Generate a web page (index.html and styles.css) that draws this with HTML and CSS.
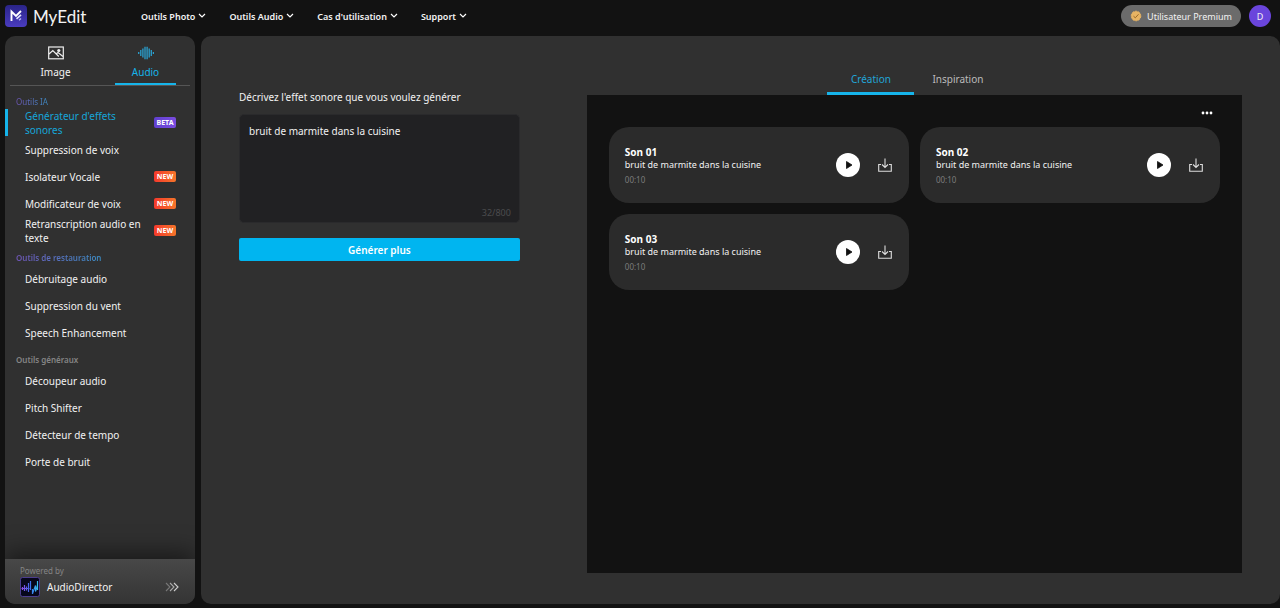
FILE: index.html
```html
<!DOCTYPE html>
<html lang="fr">

<head>
    <meta charset="UTF-8">
    <meta name="viewport" content="width=device-width, initial-scale=1.0">
    <title>MyEdit</title>
    <link rel="stylesheet" href="styles.css">
</head>

<body>

    <!-- shared icons -->
    <svg class="defs" width="0" height="0">
        <symbol id="chevron" viewBox="0 0 8 6">
            <path d="M1 1l3 3 3-3" fill="none" stroke="#fff" stroke-width="1.2" />
        </symbol>
        <symbol id="play" viewBox="0 0 24 24">
            <path d="M10.5 8.5v7l5.500-3.500z" fill="#111" stroke="#111" stroke-width="0.8" stroke-linejoin="round" />
        </symbol>
        <symbol id="download" viewBox="0 0 14 14">
            <path d="M7 0.5v9M4 6.5l3 3 3-3M3 6.5H0.7v6.8h12.6V6.5H11" fill="none" stroke="#ddd" stroke-width="1.1" />
        </symbol>
    </svg>

    <header class="header">
        <a class="logo" href="#">
            <svg width="22" height="22" viewBox="0 0 22 22">
                <defs>
                    <linearGradient id="logoBg" x1="0" y1="0" x2="0" y2="1">
                        <stop offset="0" stop-color="#2a2488" />
                        <stop offset="1" stop-color="#4a3cc0" />
                    </linearGradient>
                </defs>
                <rect width="22" height="22" rx="4" fill="url(#logoBg)" />
                <path d="M6.5 16V6.5l4.500 4.500L16 6" fill="none" stroke="#fff" stroke-width="1.9" />
                <path d="M11.500 13.800l4.500-4" fill="none" stroke="#e4e6ff" stroke-width="1.6" />
                <path d="M14 15.200l2-1.700" fill="none" stroke="#b5b8f5" stroke-width="1.4" />
            </svg>
            <span>MyEdit</span>
        </a>
        <nav class="menu">
            <a href="#">Outils Photo <svg width="8" height="6"><use href="#chevron" /></svg></a>
            <a href="#">Outils Audio <svg width="8" height="6"><use href="#chevron" /></svg></a>
            <a href="#">Cas d'utilisation <svg width="8" height="6"><use href="#chevron" /></svg></a>
            <a href="#">Support <svg width="8" height="6"><use href="#chevron" /></svg></a>
        </nav>
        <button class="premium">
            <svg width="12" height="12" viewBox="0 0 12 12">
                <circle cx="6" cy="6" r="4.8" fill="#e9b463" stroke="#e9b463" stroke-dasharray="2 1" />
                <path d="M3.500 6.200l1.800 1.600 3.200-3.500" fill="none" stroke="#9b6a25" stroke-width="1" />
            </svg>
            Utilisateur Premium
        </button>
        <button class="avatar">D</button>
    </header>

    <div class="page">

        <aside class="sidebar">
            <div class="tabs">
                <button class="tab">
                    <svg width="16" height="14" viewBox="0 0 16 14">
                        <rect x="0.7" y="1" width="14.600" height="11.800" fill="none" stroke="#eee" stroke-width="1.2" />
                        <path d="M1 8l3.800-3.500 6 6M8 8l2-1.500 5 4" fill="none" stroke="#eee" stroke-width="1.2" />
                        <circle cx="10.800" cy="4.500" r="1.6" fill="#eee" />
                    </svg>
                    Image
                </button>
                <button class="tab active">
                    <svg width="16" height="14" viewBox="0 0 16 14">
                        <path d="M0.700 6v2M2.800 4v6M4.900 2.500v9M7 0.800v12.400M9.100 0.800v12.400M11.200 2.500v9M13.300 4v6M15.400 6v2" stroke="#2aa0cf" stroke-width="1.3" />
                    </svg>
                    Audio
                </button>
            </div>

            <nav class="tools">
                <h2 class="purple">Outils IA</h2>
                <a class="tool current" href="#"><span>Générateur d'effets sonores</span><em class="badge beta">BETA</em></a>
                <a class="tool" href="#">Suppression de voix</a>
                <a class="tool" href="#"><span>Isolateur Vocale</span><em class="badge">NEW</em></a>
                <a class="tool" href="#"><span>Modificateur de voix</span><em class="badge">NEW</em></a>
                <a class="tool" href="#"><span>Retranscription audio en texte</span><em class="badge">NEW</em></a>

                <h2 class="purple bold">Outils de restauration</h2>
                <a class="tool" href="#">Débruitage audio</a>
                <a class="tool" href="#">Suppression du vent</a>
                <a class="tool" href="#">Speech Enhancement</a>

                <h2 class="bold">Outils généraux</h2>
                <a class="tool" href="#">Découpeur audio</a>
                <a class="tool" href="#">Pitch Shifter</a>
                <a class="tool" href="#">Détecteur de tempo</a>
                <a class="tool" href="#">Porte de bruit</a>
            </nav>

            <a class="powered" href="#">
                <small>Powered by</small>
                <span class="product">
                    <svg width="20" height="20" viewBox="0 0 20 20">
                        <defs>
                            <linearGradient id="wave" gradientUnits="userSpaceOnUse" x1="1" y1="0" x2="19" y2="0">
                                <stop offset="0" stop-color="#9a45e8" />
                                <stop offset="0.5" stop-color="#3b6cf0" />
                                <stop offset="1" stop-color="#35cdf0" />
                            </linearGradient>
                        </defs>
                        <rect x="0.5" y="0.5" width="19" height="19" rx="2" fill="#07071c" stroke="#4c3d8f" />
                        <path d="M2.500 10v3M4.500 8v6M6.500 9.500v4M8.500 6v9M10.500 4v9M12.500 12v5M17.500 4v9" fill="none" stroke="url(#wave)" stroke-width="1.2" />
                        <path d="M1.500 11.500h8M12.500 16.500l3-8v6l2-6" fill="none" stroke="url(#wave)" stroke-width="1.1" />
                    </svg>
                    AudioDirector
                    <svg class="arrows" width="15" height="10" viewBox="0 0 15 10" fill="none" stroke-width="1.1">
                        <path d="M1 1l4 4-4 4" stroke="#777" />
                        <path d="M5 1l4 4-4 4" stroke="#aaa" />
                        <path d="M9 1l4 4-4 4" stroke="#ccc" />
                    </svg>
                </span>
            </a>
        </aside>

        <main class="main">
            <form class="generator">
                <label for="prompt">Décrivez l'effet sonore que vous voulez générer</label>
                <div class="prompt-box">
                    <textarea id="prompt" name="prompt" maxlength="800">bruit de marmite dans la cuisine</textarea>
                    <span class="counter">32/800</span>
                </div>
                <button type="button" class="generate">Générer plus</button>
            </form>

            <section class="results">
                <div class="result-tabs">
                    <button class="active">Création</button>
                    <button>Inspiration</button>
                </div>
                <div class="panel">
                    <button class="more" aria-label="Plus">
                        <svg width="12" height="4" viewBox="0 0 12 4" fill="#fff">
                            <circle cx="2" cy="2" r="1.4" />
                            <circle cx="6" cy="2" r="1.4" />
                            <circle cx="10" cy="2" r="1.4" />
                        </svg>
                    </button>
                    <div class="sounds">
                        <article class="sound">
                            <div class="info">
                                <h3>Son 01</h3>
                                <p>bruit de marmite dans la cuisine</p>
                                <time>00:10</time>
                            </div>
                            <button class="play" aria-label="Lire"><svg width="24" height="24"><use href="#play" /></svg></button>
                            <button class="download" aria-label="Télécharger"><svg width="14" height="14"><use href="#download" /></svg></button>
                        </article>
                        <article class="sound">
                            <div class="info">
                                <h3>Son 02</h3>
                                <p>bruit de marmite dans la cuisine</p>
                                <time>00:10</time>
                            </div>
                            <button class="play" aria-label="Lire"><svg width="24" height="24"><use href="#play" /></svg></button>
                            <button class="download" aria-label="Télécharger"><svg width="14" height="14"><use href="#download" /></svg></button>
                        </article>
                        <article class="sound">
                            <div class="info">
                                <h3>Son 03</h3>
                                <p>bruit de marmite dans la cuisine</p>
                                <time>00:10</time>
                            </div>
                            <button class="play" aria-label="Lire"><svg width="24" height="24"><use href="#play" /></svg></button>
                            <button class="download" aria-label="Télécharger"><svg width="14" height="14"><use href="#download" /></svg></button>
                        </article>
                    </div>
                </div>
            </section>
        </main>

    </div>

</body>

</html>
```
FILE: styles.css
```css
* {
    box-sizing: border-box;
}

body {
    display: flex;
    flex-direction: column;
    height: 100vh;
    margin: 0;
    background-color: #121212;
    color: #f2f2f2;
    font-family: 'Segoe UI', 'Noto Sans', sans-serif;
    font-size: 10px;
}

a {
    color: inherit;
    text-decoration: none;
}

button {
    padding: 0;
    border: none;
    background: none;
    color: inherit;
    font-family: inherit;
    font-size: inherit;
    cursor: pointer;
}

svg {
    flex-shrink: 0;
}

h2, h3, p {
    margin: 0;
}

.defs {
    position: absolute;
}

/* Header */
.header {
    display: flex;
    align-items: center;
    flex-shrink: 0;
    height: 36px;
    padding: 0 9px 4px 5px;
}

.logo {
    display: flex;
    align-items: center;
    gap: 6px;
    width: 136px;
    font-family: Lato, sans-serif;
    font-size: 17px;
}

.menu {
    display: flex;
    gap: 23px;
    flex: 1;
    font-size: 9px;
    font-weight: 600;
}

.menu a {
    display: flex;
    align-items: center;
    gap: 3px;
}

.premium {
    display: flex;
    align-items: center;
    justify-content: center;
    gap: 5px;
    width: 120px;
    height: 22px;
    border-radius: 11px;
    background-color: #6b6b6b;
    font-size: 9px;
}

.avatar {
    width: 22px;
    height: 22px;
    margin-left: 8px;
    border-radius: 50%;
    background-color: #6a45dc;
    font-size: 9px;
}

.page {
    display: flex;
    flex: 1;
    gap: 6px;
    min-height: 0;
    padding: 0 0 4px 5px;
}

/* Sidebar */
.sidebar {
    display: flex;
    flex-direction: column;
    flex-shrink: 0;
    width: 190px;
    border-radius: 10px;
    background-color: #303030;
    overflow: hidden;
}

.tabs {
    display: flex;
    justify-content: space-between;
    margin: 0 5px;
    padding: 0 14px 0 15px;
    border-bottom: 1px solid #555;
}

.tab {
    display: flex;
    flex-direction: column;
    align-items: center;
    gap: 4px;
    width: 61px;
    height: 49px;
    padding-top: 10px;
    line-height: 16px;
    border-bottom: 2px solid transparent;
}

.tab.active {
    border-color: #16b4ea;
    color: #16b4ea;
}

.tools {
    flex: 1;
    padding-top: 2px;
}

.tools h2 {
    width: fit-content;
    margin: 6px 0 0 11px;
    color: #858585;
    font-size: 8px;
    font-weight: 400;
    line-height: 15px;
}

.tools h2.bold {
    font-weight: 600;
}

.tools .purple {
    background: linear-gradient(90deg, #6f55b5, #3c8cc4);
    -webkit-background-clip: text;
    background-clip: text;
    color: transparent;
}

.tool {
    display: flex;
    align-items: center;
    justify-content: space-between;
    height: 27px;
    padding: 0 19px 0 17px;
    border-left: 3px solid transparent;
    line-height: 14px;
}

.tool span {
    max-width: 120px;
}

.tool.current {
    border-color: #16b4ea;
    color: #16a6d8;
}

.badge {
    width: 22px;
    border-radius: 2px;
    background: linear-gradient(90deg, #f5392c, #f5752a);
    color: #fff;
    font-size: 7px;
    font-style: normal;
    font-weight: 700;
    line-height: 11px;
    text-align: center;
}

.badge.beta {
    background: linear-gradient(90deg, #6040d0, #7a4ce0);
}

.powered {
    display: block;
    height: 45px;
    padding: 6px 15px 0;
    background: linear-gradient(#484848, #343434);
    box-shadow: 0 -6px 24px rgba(0, 0, 0, 0.5);
}

.powered small {
    display: block;
    color: #858585;
    font-size: 8px;
    line-height: 12px;
}

.product {
    display: flex;
    align-items: center;
    gap: 7px;
}

.arrows {
    margin-left: auto;
}

/* Main */
.main {
    display: flex;
    flex: 1;
    gap: 67px;
    padding: 32px 38px 31px;
    border-radius: 10px;
    background-color: #303030;
}

.generator {
    flex: 0 0 28%;
    padding-top: 21px;
}

.generator label {
    display: block;
    margin-bottom: 9px;
    line-height: 16px;
}

.prompt-box {
    position: relative;
    height: 109px;
    margin-bottom: 15px;
}

.prompt-box textarea {
    width: 100%;
    height: 100%;
    padding: 9px;
    border: 1px solid #2a2a2c;
    border-radius: 5px;
    background-color: #212123;
    color: #f2f2f2;
    font-family: inherit;
    font-size: 10px;
    line-height: 14px;
    resize: none;
}

.counter {
    position: absolute;
    right: 9px;
    bottom: 4px;
    color: #4c4c4e;
    font-size: 9px;
}

.generate {
    width: 100%;
    height: 23px;
    border-radius: 2px;
    background-color: #00b5f0;
    color: #fff;
    font-weight: 600;
}

.results {
    display: flex;
    flex-direction: column;
    flex: 1;
}

.result-tabs {
    display: flex;
    justify-content: center;
}

.result-tabs button {
    width: 87px;
    height: 27px;
    padding-bottom: 2px;
    border-bottom: 3px solid transparent;
    color: #bbb;
}

.result-tabs .active {
    border-color: #16b4ea;
    color: #22a5d6;
}

.panel {
    flex: 1;
    padding: 16px 22px;
    background-color: #121212;
}

.more {
    display: block;
    height: 4px;
    margin: 0 7px 12px auto;
    line-height: 0;
}

.sounds {
    display: grid;
    grid-template-columns: 1fr 1fr;
    gap: 11px;
}

.sound {
    display: flex;
    align-items: center;
    height: 76px;
    padding: 0 17px 0 16px;
    border-radius: 20px;
    background-color: #2b2b2b;
}

.info {
    flex: 1;
    padding-top: 2px;
    font-size: 9px;
}

.info h3 {
    color: #fff;
    font-size: 10px;
    line-height: 13px;
}

.info p {
    line-height: 12px;
}

.info time {
    display: block;
    margin-top: 3px;
    color: #7c7c7c;
    font-size: 8px;
    line-height: 12px;
}

.play {
    height: 24px;
    border-radius: 50%;
    background-color: #fff;
}

.download {
    height: 14px;
    margin-left: 18px;
}
```
